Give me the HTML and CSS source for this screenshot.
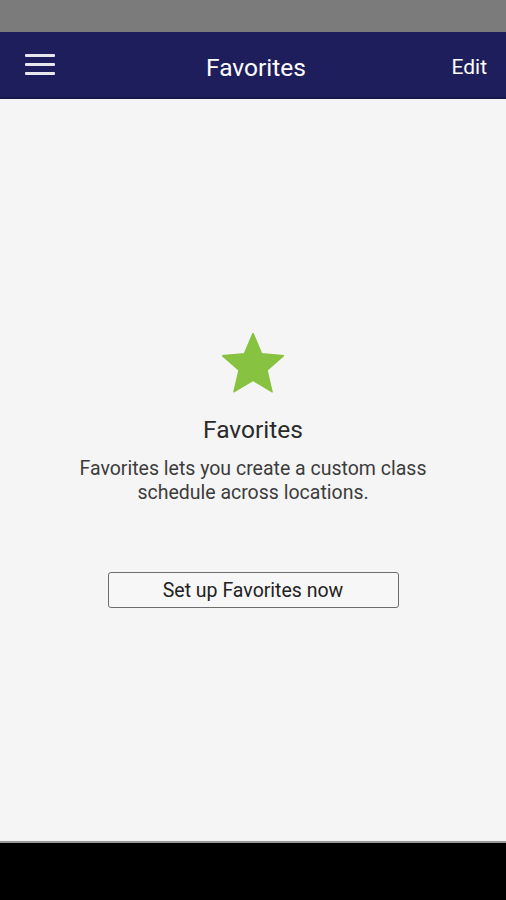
FILE: index.html
```html
<!DOCTYPE html>
<html>
<head>
<meta charset="utf-8">
<link rel="stylesheet" href="styles.css">
</head>
<body>
<div class="status"></div>
<header class="appbar">
  <div class="menu" aria-label="menu">
    <span></span><span></span><span></span>
  </div>
  <div class="title">Favorites</div>
  <div class="edit">Edit</div>
</header>
<main class="content">
  <svg class="star" width="62" height="60" viewBox="2 2 20 19.3"><path d="M12 17.27L18.18 21l-1.64-7.03L22 9.24l-7.19-.61L12 2 9.19 8.63 2 9.24l5.46 4.73L5.82 21z" fill="#87c240" stroke="#87c240" stroke-width="0.4" stroke-linejoin="round"/></svg>
  <h1 class="heading">Favorites</h1>
  <p class="desc">Favorites lets you create a custom class<br>schedule across locations.</p>
  <button class="setup">Set up Favorites now</button>
</main>
<div class="navbar"></div>
</body>
</html>
```
FILE: styles.css
```css
* { box-sizing: border-box; }
html, body { margin: 0; padding: 0; height: 100%; }
body {
  width: 506px;
  height: 900px;
  display: flex;
  flex-direction: column;
  font-family: Roboto, "Liberation Sans", sans-serif;
  background: #f5f5f5;
}
.status { height: 32px; background: #7b7b7b; flex: none; }
.appbar {
  height: 67px;
  flex: none;
  background: #1f1e5c;
  border-bottom: 2px solid #17164a;
  display: grid;
  grid-template-columns: 1fr auto 1fr;
  align-items: center;
  padding: 5px 19px 0 25px;
  color: #fff;
}
.menu { display: flex; flex-direction: column; gap: 6px; width: 30px; margin-top: -5px; }
.menu span { display: block; height: 3px; background: #e8e8f0; border-radius: 1px; }
.title { font-size: 24.5px; text-align: center; }
.edit { font-size: 21px; justify-self: end; }
.content {
  flex: 1;
  display: flex;
  flex-direction: column;
  align-items: center;
  padding-top: 234px;
  background: #f5f5f5;
}
.star { display: block; }
.heading {
  margin: 22px 0 0;
  font-size: 24.5px;
  font-weight: 400;
  color: #2a2a2a;
  line-height: 30px;
}
.desc {
  margin: 12px 0 0;
  font-size: 19.5px;
  line-height: 24px;
  color: #3c3c3c;
  text-align: center;
}
.setup {
  margin-top: 67px;
  width: 291px;
  height: 36px;
  background: #f7f7f7;
  border: 1px solid #6e6e6e;
  border-radius: 3px;
  font-family: Roboto, "Liberation Sans", sans-serif;
  font-size: 19.5px;
  color: #222;
  padding: 0;
}
.navbar { height: 59px; flex: none; background: #000; border-top: 2px solid #9a9a9a; }
```
